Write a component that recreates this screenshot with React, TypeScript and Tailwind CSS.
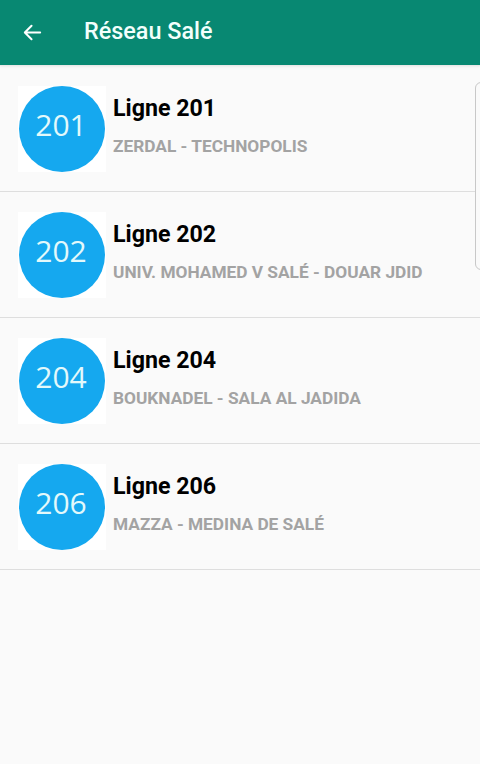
import React from "react";

const lines = [
  { n: "201", route: "ZERDAL - TECHNOPOLIS" },
  { n: "202", route: "UNIV. MOHAMED V SALÉ - DOUAR JDID" },
  { n: "204", route: "BOUKNADEL - SALA AL JADIDA" },
  { n: "206", route: "MAZZA - MEDINA DE SALÉ" },
];

export default function App() {
  return (
    <div
      className="relative w-[480px] h-[764px] overflow-hidden bg-[#fafafa]"
      style={{ fontFamily: "Roboto, 'Liberation Sans', sans-serif" }}
    >
      <header className="h-[65px] bg-[#088872] flex items-center shadow-sm">
        <div className="w-[84px] flex items-center pl-[21px]">
          <svg width="23" height="23" viewBox="0 0 24 24" fill="none">
            <path d="M20 12H4.5M11 5l-7 7 7 7" stroke="#ffffff" strokeWidth="2.1" strokeLinecap="round" strokeLinejoin="round" />
          </svg>
        </div>
        <h1 className="text-[23.4px] font-medium text-[#f2fffc] mt-[-1px]">Réseau Salé</h1>
      </header>
      <div className="h-px bg-[#e8e8e8]" />
      <ul>
        {lines.map((l) => (
          <li key={l.n} className="h-[126px] border-b-[1.5px] border-[#dedede] flex items-center">
            <div className="ml-[18px] w-[88px] h-[86px] bg-white flex items-center justify-center">
              <div
                className="w-[86px] h-[86px] rounded-full bg-[#15a8ef] flex items-center justify-center text-[30px] text-[#e3f9fb] pr-[2px] pb-[8px]"
                style={{ fontFamily: "'Open Sans', sans-serif" }}
              >
                {l.n}
              </div>
            </div>
            <div className="ml-[7px] flex flex-col mt-[-6px]">
              <div className="text-[23.2px] font-bold text-black leading-[28px]">Ligne {l.n}</div>
              <div className="mt-[13px] text-[17.3px] font-bold text-[#a3a3a3] leading-[22px]">{l.route}</div>
            </div>
          </li>
        ))}
      </ul>
      <div className="absolute left-[475px] top-[82px] w-[20px] h-[188px] rounded-[6px] border border-[#c8c8c8] bg-[#fafafa]" />
    </div>
  );
}
